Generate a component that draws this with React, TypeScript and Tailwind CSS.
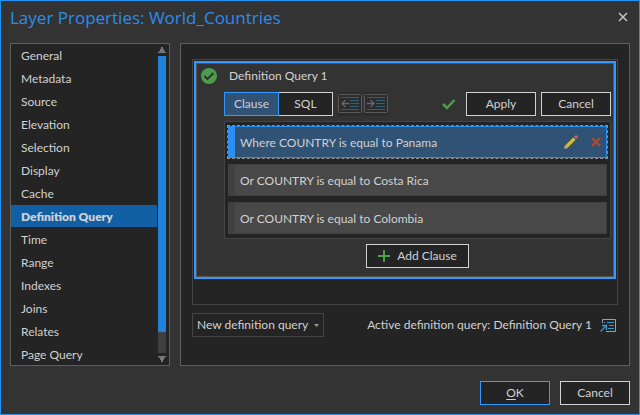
import React, { useState } from "react";

const PAGES = [
  "General", "Metadata", "Source", "Elevation", "Selection", "Display", "Cache",
  "Definition Query", "Time", "Range", "Indexes", "Joins", "Relates", "Page Query",
];

const CLAUSES = [
  "Where COUNTRY is equal to Panama",
  "Or COUNTRY is equal to Costa Rica",
  "Or COUNTRY is equal to Colombia",
];

function Button({ children, primary = false, className = "w-[70px]" }: {
  children: React.ReactNode; primary?: boolean; className?: string;
}) {
  return (
    <button
      type="button"
      className={`flex h-6 shrink-0 items-center justify-center border bg-[#242424] ${primary ? "border-[#3399ff]" : "border-[#d1d1d1]"} ${className}`}
    >
      {children}
    </button>
  );
}

function IndentIcon({ outdent = false }: { outdent?: boolean }) {
  return (
    <svg width="24" height="24" viewBox="0 0 24 24" fill="none" aria-hidden="true">
      <path d="M0 0h24v24H0z" fill="#2c2c2c" />
      <rect x=".5" y="2.5" width="23" height="18" rx="1" stroke="#5b5b5b" />
      <path d="M3 5.5h18M12 8.5h9M12 11.5h9M12 14.5h9M3 17.5h18" stroke="#305f7b" />
      {outdent
        ? <path d="M11 11.5H4M7.5 8L4 11.5L7.5 15" stroke="#666" strokeWidth="1.3" />
        : <path d="M3 11.5h7M6.500 8L10 11.5L6.500 15" stroke="#666" strokeWidth="1.3" />}
    </svg>
  );
}

function PencilIcon() {
  return (
    <svg width="14" height="14" viewBox="0 0 14 14" aria-hidden="true">
      <path d="M0 14l1-4 3 3z" fill="#c9a18a" />
      <path d="M1.200 10.400l8-8 2.400 2.400-8 8z" fill="#d3bd2f" />
      <path d="M9.200 2.400l1-1 2.400 2.400-1 1z" fill="#6a6a6a" />
      <path d="M10.200 1.400Q12-.6 13.300.7T12.600 3.800z" fill="#c9694f" />
      <path d="M0 14l.5-1.800 1.300 1.300z" fill="#8a8a8a" />
    </svg>
  );
}

export default function App() {
  const [page, setPage] = useState("Definition Query");
  return (
    <div className="flex min-h-screen w-full flex-col border border-[#2193f6] bg-[#333333] px-[9px] pb-[9px] font-['Lato','Open_Sans',sans-serif] text-[12px] leading-4 text-[#d1d1d1]">
      <header className="flex h-[42px] shrink-0 items-start justify-between pt-[5px] pr-0.5">
        <h1 className="font-['Open_Sans','Noto_Sans',sans-serif] text-[17px] leading-6 text-[#2d8ceb]">Layer Properties: World_Countries</h1>
        <button type="button" aria-label="Close" className="mt-1.5 text-[#c4c4c4]">
          <svg width="10" height="10" viewBox="0 0 10 10" fill="none" stroke="currentColor" strokeWidth="1.5">
            <path d="M1 1l8 8M9 1L1 9" />
          </svg>
        </button>
      </header>

      <main className="flex gap-[10px]">
        <nav className="flex w-[160px] shrink-0 border border-[#5f5f5f] bg-[#242424]">
          <ul className="flex flex-1 flex-col gap-px">
            {PAGES.map((name) => (
              <li key={name}>
                <button
                  type="button"
                  onClick={() => setPage(name)}
                  className={`flex h-[22px] w-full items-center pt-0.5 pl-[10px] text-left ${name === page ? "bg-[#1160a5] font-extrabold" : ""}`}
                >
                  {name}
                </button>
              </li>
            ))}
          </ul>
          <div className="ml-px mr-[3px] flex w-2 flex-col items-center pt-[3px] pb-[3px]">
            <svg width="8" height="9" viewBox="0 0 8 9" fill="#777" aria-hidden="true">
              <path d="M3 0h2v2h1v2h1v1h1v1H0V5h1V4h1V2h1z" />
            </svg>
            <div className="flex w-full flex-1 flex-col bg-[#3f3f3f]">
              <div className="h-[276px] w-full bg-[#2182da]" />
            </div>
            <svg width="8" height="9" viewBox="0 0 8 9" fill="#777" aria-hidden="true">
              <path d="M3 9h2V7h1V5h1V4h1V3H0v1h1v1h1v2h1z" />
            </svg>
          </div>
        </nav>

        <section className="flex flex-1 flex-col border border-[#5f5f5f] bg-[#242424] px-[11px] pt-[15px] pb-7">
          <div className="flex-1 border border-[#444] p-px">
            <article className="border-2 border-[#3399ff] bg-[#333333]">
              <div className="flex flex-col border border-[#5b5248] pt-1 pr-0.5 pb-2 pl-1">
                <div className="flex h-4 items-center gap-3">
                  <svg width="16" height="16" viewBox="0 0 16 16" aria-hidden="true">
                    <circle cx="8" cy="8" r="8" fill="#4b9c4b" />
                    <path d="M3.500 8l3 3 6-6" fill="none" stroke="#2d2d2d" strokeWidth="1.800" />
                  </svg>
                  <h2>Definition Query 1</h2>
                </div>

                <div className="mt-2 ml-[23px] flex flex-col">
                  <div className="flex h-6 items-center">
                    <button type="button" className="h-6 w-[55px] border border-[#3399ff] bg-[#2f5275]">Clause</button>
                    <button type="button" className="h-6 w-[54px] border border-l-0 border-[#d1d1d1] bg-[#242424]">SQL</button>
                    <div className="ml-[5px] flex gap-0.5">
                      <button type="button" disabled aria-label="Outdent"><IndentIcon outdent /></button>
                      <button type="button" disabled aria-label="Indent"><IndentIcon /></button>
                    </div>
                    <div className="ml-auto flex items-center gap-[5px]">
                      <svg width="14" height="12" viewBox="0 0 14 12" fill="none" stroke="#4b9c4b" strokeWidth="2.500" className="mr-[5px]" aria-hidden="true">
                        <path d="M1 6l4 4 7.500-8" />
                      </svg>
                      <Button>Apply</Button>
                      <Button>Cancel</Button>
                    </div>
                  </div>

                  <ul className="mt-[5px] flex flex-col gap-1.5 border border-[#444] bg-[#242424] px-[3px] py-1">
                    {CLAUSES.map((text, i) => (
                      <li
                        key={text}
                        className={`flex h-8 items-stretch border ${i === 0 ? "border-[#2b90f0] bg-[#2f5275] outline outline-dashed outline-[#8a8f94]" : "border-[#404040] bg-[#484848]"}`}
                      >
                        <span className={`w-1.5 ${i === 0 ? "bg-[#2b90f5]" : "bg-[#404040]"}`} />
                        <span className="flex flex-1 items-center pt-0.5 pl-[5px]">{text}</span>
                        {i === 0 && (
                          <span className="flex items-center gap-[13px] pr-[5px]">
                            <button type="button" aria-label="Edit clause"><PencilIcon /></button>
                            <button type="button" aria-label="Delete clause">
                              <svg width="10" height="10" viewBox="0 0 10 10" stroke="#b1492c" strokeWidth="2.400">
                                <path d="M1 1l8 8M9 1L1 9" />
                              </svg>
                            </button>
                          </span>
                        )}
                      </li>
                    ))}
                  </ul>
                </div>

                <div className="mt-[5px] flex justify-center pl-[23px]">
                  <Button className="w-[103px] gap-[7px]">
                    <svg width="12" height="12" viewBox="0 0 12 12" stroke="#4b9c4b" strokeWidth="2" aria-hidden="true">
                      <path d="M6 0v12M0 6h12" />
                    </svg>
                    Add Clause
                  </Button>
                </div>
              </div>
            </article>
          </div>

          <div className="mt-2 flex h-6 items-center justify-between">
            <div className="relative">
              <select aria-label="Definition query options" className="h-6 w-[132px] appearance-none border border-[#444] bg-[#242424] pl-1">
                <option>New definition query</option>
              </select>
              <svg width="5" height="3" viewBox="0 0 5 3" fill="#999" className="pointer-events-none absolute top-[11px] right-[5px]" aria-hidden="true">
                <path d="M0 0h5L2.500 3z" />
              </svg>
            </div>
            <div className="flex items-center gap-2 pr-0.5">
              <span>Active definition query: Definition Query 1</span>
              <button type="button" aria-label="Show active query">
                <svg width="16" height="13" viewBox="0 0 16 13" fill="none" aria-hidden="true">
                  <path d="M2.500 4V.5h13v12H6" stroke="#a0a0a0" />
                  <path d="M4 3.500h1M7 3.500h7M9 6.500h5M8 9.500h6" stroke="#3a96d2" />
                  <path d="M.5 12.500l6-6M2 6.500h4.500V11" stroke="#3a96d2" strokeWidth="1.300" />
                </svg>
              </button>
            </div>
          </div>
        </section>
      </main>

      <footer className="mt-auto flex justify-end gap-[10px] pt-[15px]">
        <Button primary><span><u className="underline-offset-2">O</u>K</span></Button>
        <Button>Cancel</Button>
      </footer>
    </div>
  );
}
